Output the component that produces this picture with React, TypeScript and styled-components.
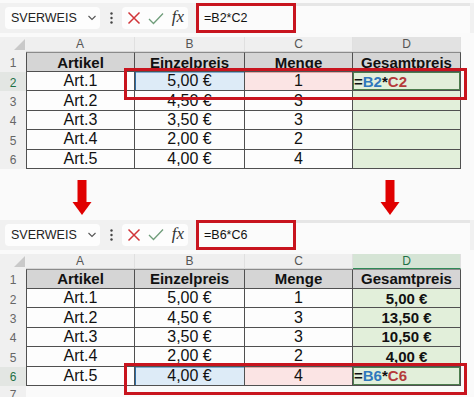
import React from "react";
import styled, { createGlobalStyle } from "styled-components";

const GlobalStyle = createGlobalStyle`
  html, body {
    margin: 0;
    padding: 0;
    background: #fafafa;
    font-family: "Liberation Sans", Arial, sans-serif;
  }
`;

const COLS = "26px 109px 110px 108px 108px";
const RED = "#c8141e";

const Page = styled.div`
  width: 474px;
  height: 397px;
  overflow: hidden;
  padding-top: 3px;
  box-sizing: border-box;
`;

const Panel = styled.div`
  display: flex;
  flex-direction: column;
  gap: 4px;
`;

const Toolbar = styled.div`
  height: 30px;
  display: flex;
  align-items: center;
  padding-left: 5px;
  background: #f1f1f1;
`;

const NameBox = styled.div`
  width: 95px;
  height: 22px;
  box-sizing: border-box;
  background: #fdfdfd;
  border-radius: 4px;
  display: flex;
  align-items: center;
  justify-content: space-between;
  padding: 0 3px 0 6px;
  font-size: 12.5px;
  color: #222;
`;

const Dots = styled.div`
  width: 22px;
  display: flex;
  justify-content: center;
`;

const IconBox = styled.div`
  width: 66px;
  height: 22px;
  background: #fdfdfd;
  border-radius: 4px;
  display: flex;
  align-items: center;
  justify-content: space-between;
  padding: 0 4px 0 5px;
  box-sizing: border-box;
`;

const Fx = styled.span`
  font-family: "Liberation Serif", "Times New Roman", serif;
  font-style: italic;
  font-size: 17px;
  color: #333;
  margin-top: -2px;
`;

const FormulaBar = styled.div`
  flex: 1;
  height: 30px;
  margin-left: 8px;
  margin-right: 4px;
  display: flex;
  background: #fbfbfb;
  border-top: 3px solid #e6e6e6;
  box-sizing: border-box;
  position: relative;
`;

const FormulaBox = styled.div`
  position: absolute;
  left: 0;
  top: -3px;
  width: 100px;
  height: 30px;
  box-sizing: border-box;
  border: 3px solid ${RED};
  display: flex;
  align-items: center;
  padding-left: 5px;
  font-size: 12.5px;
  color: #111;
`;

const Grid = styled.div`
  display: flex;
  flex-direction: column;
`;

const Row = styled.div<{ $h: number }>`
  display: grid;
  grid-template-columns: ${COLS};
  height: ${(p) => p.$h}px;
  position: relative;
`;

const Corner = styled.div`
  background: #f0f0f0;
  position: relative;
  &::after {
    content: "";
    position: absolute;
    right: 1px;
    bottom: 2px;
    border-left: 11px solid transparent;
    border-bottom: 11px solid #c9c9c9;
  }
`;

const Letter = styled.div<{ $sel?: "grey" | "green" }>`
  background: ${(p) =>
    p.$sel === "green" ? "#d5e4d5" : p.$sel === "grey" ? "#e2e2e2" : "#efefef"};
  color: ${(p) => (p.$sel === "green" ? "#1e7145" : "#555")};
  border-bottom: 1px solid ${(p) => (p.$sel === "green" ? "#2e8a57" : "#d6d6d6")};
  border-right: 1px solid #e0e0e0;
  font-size: 12px;
  display: flex;
  align-items: center;
  justify-content: center;
`;

const RowNum = styled.div<{ $sel?: boolean }>`
  background: ${(p) => (p.$sel ? "#e3e6e3" : "#f0f0f0")};
  color: ${(p) => (p.$sel ? "#1e7145" : "#666")};
  font-size: 12px;
  display: flex;
  align-items: center;
  justify-content: center;
  padding-top: 2px;
  box-sizing: border-box;
`;

type Tone = "plain" | "head" | "green" | "blue" | "pink" | "active";

const toneBg: Record<Tone, string> = {
  plain: "#fdfdfd",
  head: "#d5d5d5",
  green: "#e2efda",
  blue: "#ddebf7",
  pink: "#fbe4e4",
  active: "#e2efda",
};

const Cell = styled.div<{ $tone: Tone; $bold?: boolean; $first?: boolean; $top?: boolean; $left?: boolean }>`
  background: ${(p) => toneBg[p.$tone]};
  border-right: 1px solid #505050;
  border-bottom: 1px solid #505050;
  border-left: ${(p) => (p.$first ? "1px solid #505050" : "none")};
  border-top: ${(p) => (p.$top ? "1px solid #8a8a8a" : "none")};
  box-sizing: border-box;
  display: flex;
  align-items: center;
  justify-content: ${(p) => (p.$left ? "flex-start" : "center")};
  padding-left: ${(p) => (p.$left ? "1px" : "0")};
  font-size: ${(p) => (p.$bold ? "15px" : "16px")};
  font-weight: ${(p) => (p.$bold ? 700 : 400)};
  color: #111;
  ${(p) => p.$tone === "blue" && "box-shadow: inset 1px 0 0 #2e6ea6, inset 0 1px 0 #7fa9d0;"}
  ${(p) => p.$tone === "pink" && "box-shadow: inset 0 1px 0 #e3a3a3;"}
  ${(p) => p.$tone === "active" && "box-shadow: inset 0 0 0 1px #4d7d4d;"}
`;

const Ref = styled.span<{ $c: string }>`
  color: ${(p) => p.$c};
`;

const Highlight = styled.div<{ $top: number; $h: number }>`
  position: absolute;
  z-index: 2;
  left: 124px;
  width: 343px;
  top: ${(p) => p.$top}px;
  height: ${(p) => p.$h}px;
  border: 3px solid ${RED};
  box-sizing: border-box;
  pointer-events: none;
`;

const EmptyRow = styled.div`
  display: grid;
  grid-template-columns: ${COLS};
  height: 14px;
`;

const ArrowRow = styled.div`
  height: 51px;
  display: flex;
  align-items: flex-start;
  padding: 11px 0 0 72px;
  gap: 288px;
  box-sizing: border-box;
`;

const Arrow = () => (
  <svg width="20" height="35" viewBox="0 0 20 35">
    <rect x="5.5" y="0" width="9" height="24" fill="#e00000" />
    <polygon points="0.5,22 19.5,22 10,35" fill="#e00000" />
  </svg>
);

const Chevron = () => (
  <svg width="10" height="8" viewBox="0 0 10 8">
    <polyline points="1.5,2 5,5.5 8.5,2" fill="none" stroke="#555" strokeWidth="1.1" />
  </svg>
);

const VDots = () => (
  <svg width="3" height="12" viewBox="0 0 3 12">
    <circle cx="1.5" cy="1.5" r="1.2" fill="#444" />
    <circle cx="1.5" cy="6" r="1.2" fill="#444" />
    <circle cx="1.5" cy="10.5" r="1.2" fill="#444" />
  </svg>
);

const Cross = () => (
  <svg width="14" height="14" viewBox="0 0 14 14">
    <path d="M1.5 1.5 L12.5 12.5 M12.5 1.5 L1.5 12.5" stroke="#d13438" strokeWidth="1.5" />
  </svg>
);

const Check = () => (
  <svg width="16" height="13" viewBox="0 0 16 13">
    <polyline points="1,7 5.5,11.5 15,1.5" fill="none" stroke="#6f9d7a" strokeWidth="1.3" />
  </svg>
);

type Item = { art: string; price: string; qty: string; total: string };

const items: Item[] = [
  { art: "Art.1", price: "5,00 €", qty: "1", total: "5,00 €" },
  { art: "Art.2", price: "4,50 €", qty: "3", total: "13,50 €" },
  { art: "Art.3", price: "3,50 €", qty: "3", total: "10,50 €" },
  { art: "Art.4", price: "2,00 €", qty: "2", total: "4,00 €" },
  { art: "Art.5", price: "4,00 €", qty: "4", total: "" },
];

const Formula = ({ n }: { n: number }) => (
  <>
    =<Ref $c="#2f78bd">B{n}</Ref>*<Ref $c="#b53a3a">C{n}</Ref>
  </>
);

const Sheet = ({ active, filled, tail }: { active: number; filled: boolean; tail?: boolean }) => (
  <Panel>
    <Toolbar>
      <NameBox>
        SVERWEIS
        <Chevron />
      </NameBox>
      <Dots>
        <VDots />
      </Dots>
      <IconBox>
        <Cross />
        <Check />
        <Fx>fx</Fx>
      </IconBox>
      <FormulaBar>
        <FormulaBox>={`B${active}*C${active}`}</FormulaBox>
      </FormulaBar>
    </Toolbar>
    <Grid>
      <Row $h={15}>
        <Corner />
        <Letter>A</Letter>
        <Letter>B</Letter>
        <Letter>C</Letter>
        <Letter $sel={filled ? "green" : "grey"}>D</Letter>
      </Row>
      <Row $h={20}>
        <RowNum>1</RowNum>
        <Cell $tone="head" $bold $first $top>Artikel</Cell>
        <Cell $tone="head" $bold $top>Einzelpreis</Cell>
        <Cell $tone="head" $bold $top>Menge</Cell>
        <Cell $tone="head" $bold $top>Gesamtpreis</Cell>
      </Row>
      {items.map((it, i) => {
        const n = i + 2;
        const sel = n === active;
        return (
          <Row $h={19.4} key={it.art}>
            <RowNum $sel={sel}>{n}</RowNum>
            <Cell $tone="plain" $first>{it.art}</Cell>
            <Cell $tone={sel ? "blue" : "plain"}>{it.price}</Cell>
            <Cell $tone={sel ? "pink" : "plain"}>{it.qty}</Cell>
            {sel ? (
              <Cell $tone="active" $bold $left>
                <Formula n={n} />
              </Cell>
            ) : (
              <Cell $tone="green" $bold>
                {filled ? it.total : ""}
              </Cell>
            )}
            {sel && <Highlight $top={-4} $h={32} />}
          </Row>
        );
      })}
      {tail && (
        <EmptyRow>
          <RowNum>7</RowNum>
        </EmptyRow>
      )}
    </Grid>
  </Panel>
);

const App = () => (
  <Page>
    <GlobalStyle />
    <Sheet active={2} filled={false} />
    <ArrowRow>
      <Arrow />
      <Arrow />
    </ArrowRow>
    <Sheet active={6} filled tail />
  </Page>
);

export default App;
